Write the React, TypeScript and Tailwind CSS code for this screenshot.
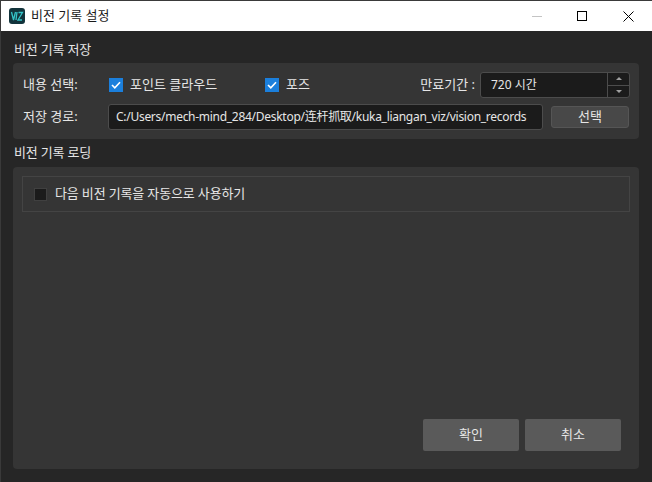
import React from "react";

const font = "font-['Noto_Sans','Noto_Sans_CJK_KR','Open_Sans',sans-serif]";

function Check({ checked }: { checked: boolean }) {
  if (!checked) {
    return <div className="w-[13px] h-[13px] bg-[#1b1b1b] border border-[#404040] shrink-0" />;
  }
  return (
    <div className="w-3.5 h-3.5 bg-[#1b7fdc] flex items-center justify-center shrink-0">
      <svg width="10" height="8" viewBox="0 0 10 8" fill="none">
        <path d="M1 4l2.800 2.800L9 1.200" stroke="#fff" strokeWidth="1.6" />
      </svg>
    </div>
  );
}

function Logo() {
  return (
    <svg width="16" height="16" viewBox="0 0 16 16" className="shrink-0">
      <rect width="16" height="16" rx="3" fill="#12333b" />
      <path d="M2.500 4l2 8 2-8M8 4l-1 8" stroke="#35c4c9" strokeWidth="1.3" fill="none" />
      <path d="M9.500 4.500h4l-4.500 7.500h4" stroke="#35c4c9" strokeWidth="1.3" fill="none" />
    </svg>
  );
}

export default function App() {
  return (
    <div className={`${font} w-[652px] h-[482px] bg-[#262626] border-t border-l border-[#3a3a3a] flex flex-col overflow-hidden text-[13px] text-[#e6e6e6]`}>
      <div className="h-[30px] bg-white flex items-center shrink-0 text-[#1a1a1a]">
        <div className="pl-2 flex items-center gap-[6px] flex-1">
          <Logo />
          <span>비전 기록 설정</span>
        </div>
        <div className="w-[46px] flex justify-center">
          <div className="w-[10px] h-px bg-[#c4c4c4]" />
        </div>
        <div className="w-[46px] flex justify-center pr-[2px]">
          <div className="w-[10px] h-[10px] border border-black" />
        </div>
        <div className="w-[46px] flex justify-center pr-[2px]">
          <svg width="11" height="11" viewBox="0 0 11 11">
            <path d="M.5.500l10 10M10.500.500l-10 10" stroke="#000" strokeWidth="1" />
          </svg>
        </div>
      </div>

      <div className="flex-1 pl-3 pr-[12px] flex flex-col">
        <div className="h-[32px] flex items-center pt-[5px] pl-[1px] tracking-[-0.2px]">비전 기록 저장</div>
        <div className="w-[626px] h-[76px] bg-[#353535] rounded-sm px-[9px] pt-[9px] flex flex-col gap-[6px]">
          <div className="h-[26px] flex items-center">
            <span className="w-[87px] shrink-0 pl-[1px]">내용 선택:</span>
            <Check checked />
            <span className="ml-[7px] w-[135px]">포인트 클라우드</span>
            <Check checked />
            <span className="ml-[7px] flex-1">포즈</span>
            <span className="mr-[5px]">만료기간 :</span>
            <div className="w-[150px] h-[26px] bg-[#1b1b1b] border border-[#4c4c4c] rounded-[3px] flex">
              <span className="flex-1 pl-[10px] leading-[24px] text-[12px]">720 시간</span>
              <div className="w-[22px] border-l border-[#4c4c4c] flex flex-col">
                <div className="flex-1 flex items-center justify-center border-b border-[#4c4c4c]">
                  <div className="w-0 h-0 border-x-[3px] border-x-transparent border-b-[3px] border-b-[#a0a0a0]" />
                </div>
                <div className="flex-1 flex items-center justify-center">
                  <div className="w-0 h-0 border-x-[3px] border-x-transparent border-t-[3px] border-t-[#a0a0a0]" />
                </div>
              </div>
            </div>
          </div>
          <div className="h-[26px] flex items-center">
            <span className="w-[86px] shrink-0 pl-[1px]">저장 경로:</span>
            <div className="w-[435px] h-[26px] bg-[#1b1b1b] border border-[#4c4c4c] rounded-[3px] pl-[7px] leading-[24px] text-[12px] tracking-[-0.28px] whitespace-nowrap overflow-hidden">
              C:/Users/mech-mind_284/Desktop/连杆抓取/kuka_liangan_viz/vision_records
            </div>
            <button className="ml-2 w-[78px] h-[22px] bg-[#484848] border border-[#555] rounded-[3px]">선택</button>
          </div>
        </div>

        <div className="h-[28px] flex items-center pl-[1px] tracking-[-0.2px]">비전 기록 로딩</div>
        <div className="w-[626px] h-[302px] bg-[#353535] rounded-sm p-[9px] flex flex-col">
          <div className="h-[36px] border border-[#444] flex items-center pl-[11px] gap-[8px]">
            <Check checked={false} />
            <span className="tracking-[-0.15px]">다음 비전 기록을 자동으로 사용하기</span>
          </div>
          <div className="flex-1" />
          <div className="flex justify-end gap-1.5 pr-[9px] pb-[9px]">
            <button className="w-[96px] h-8 bg-[#5a5a5a] rounded-[2px]">확인</button>
            <button className="w-[96px] h-8 bg-[#5a5a5a] rounded-[2px]">취소</button>
          </div>
        </div>
      </div>
    </div>
  );
}
